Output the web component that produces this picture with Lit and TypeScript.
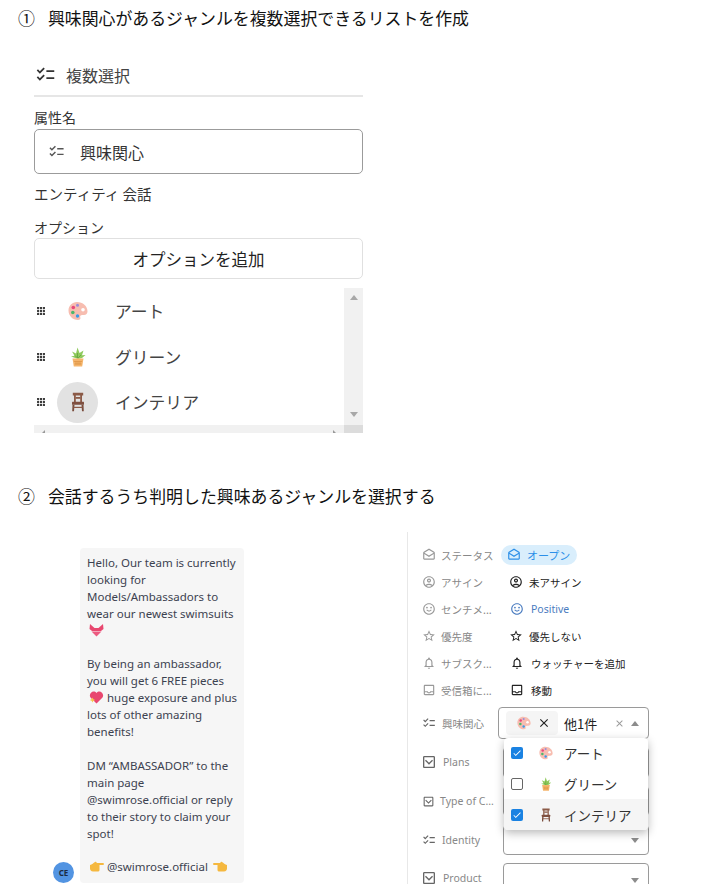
import { LitElement, html, css, svg } from "lit";
import { customElement } from "lit/decorators.js";

const P = {
  check: "M22 7h-9v2h9V7zm0 8h-9v2h9v-2zM5.54 11 2 7.46l1.41-1.41 2.12 2.12 4.24-4.24 1.41 1.41L5.54 11zm0 8L2 15.46l1.41-1.41 2.12 2.12 4.24-4.24 1.41 1.41L5.54 19z",
  mail: "M21.99 8c0-.72-.37-1.35-.94-1.7L12 1 2.95 6.3C2.38 6.65 2 7.28 2 8v10c0 1.1.9 2 2 2h16c1.1 0 2-.9 2-2l-.01-10zM19.99 8v.01L12 13 4 8l8-4.68L19.99 8zM4 18v-7.66l8 5.02 7.99-4.99L20 18H4z",
  user: "M12 2C6.48 2 2 6.48 2 12s4.48 10 10 10 10-4.48 10-10S17.52 2 12 2zM7.35 18.5C8.66 17.56 10.26 17 12 17s3.34.56 4.65 1.5c-1.31.94-2.91 1.5-4.65 1.5s-3.34-.56-4.65-1.5zm10.79-1.38C16.45 15.8 14.32 15 12 15s-4.45.8-6.14 2.12C4.7 15.73 4 13.95 4 12c0-4.42 3.58-8 8-8s8 3.58 8 8c0 1.95-.7 3.73-1.86 5.12zM12 6c-1.93 0-3.5 1.57-3.5 3.5S10.07 13 12 13s3.5-1.57 3.5-3.5S13.93 6 12 6zm0 5c-.83 0-1.5-.67-1.5-1.5S11.17 8 12 8s1.5.67 1.5 1.5S12.83 11 12 11z",
  smile: "M15.5 11a1.5 1.5 0 1 0 0-3 1.5 1.5 0 0 0 0 3zm-7 0a1.5 1.5 0 1 0 0-3 1.5 1.5 0 0 0 0 3zM12 2C6.47 2 2 6.48 2 12s4.47 10 10 10 10-4.48 10-10S17.52 2 12 2zm0 18c-4.42 0-8-3.58-8-8s3.58-8 8-8 8 3.58 8 8-3.58 8-8 8zm4.5-6.500c-.9 1.600-2.600 2.600-4.500 2.600s-3.600-1-4.500-2.600l1.300-.7c.6 1.100 1.800 1.800 3.200 1.800s2.600-.7 3.200-1.800z",
  star: "M22 9.24l-7.19-.62L12 2 9.19 8.63 2 9.24l5.46 4.73L5.82 21 12 17.27 18.18 21l-1.63-7.03L22 9.24zM12 15.4l-3.76 2.27 1-4.28-3.32-2.88 4.38-.38L12 6.1l1.71 4.04 4.38.38-3.32 2.88 1 4.28L12 15.4z",
  bell: "M12 22c1.1 0 2-.9 2-2h-4c0 1.1.9 2 2 2zm6-6v-5c0-3.07-1.63-5.64-4.5-6.32V4c0-.83-.67-1.5-1.5-1.5s-1.5.67-1.5 1.5v.68C7.64 5.36 6 7.92 6 11v5l-2 2v1h16v-1l-2-2zm-2 1H8v-6c0-2.48 1.51-4.5 4-4.5s4 2.02 4 4.5v6z",
  inbox: "M19 3H5c-1.100 0-2 .9-2 2v14c0 1.100.9 2 2 2h14c1.100 0 2-.9 2-2V5c0-1.100-.9-2-2-2zm0 16H5v-3h3.560c.69 1.190 1.970 2 3.450 2s2.750-.81 3.450-2H19v3zm0-5h-4.990c0 1.100-.9 2-2 2s-2-.9-2-2H5l-.01-9H19v9z",
  box: "M19 3H5c-1.100 0-2 .9-2 2v14c0 1.100.9 2 2 2h14c1.100 0 2-.9 2-2V5c0-1.100-.9-2-2-2zm0 16H5V5h14v14zM7.410 8.590 12 13.170l4.590-4.580L18 10l-6 6-6-6z",
  x: "M19 6.41 17.59 5 12 10.59 6.41 5 5 6.41 10.59 12 5 17.59 6.41 19 12 13.41 17.59 19 19 17.59 13.41 12z",
  tick: "M9 16.170 4.830 12l-1.420 1.410L9 19 21 7l-1.410-1.410z",
};
const ic = (d: string, size: number, color: string) => html`<svg width=${size} height=${size} viewBox="0 0 24 24" fill=${color} class="ic"><path d=${d}></path></svg>`;

const palette = (s: number) => html`<svg width=${s} height=${s} viewBox="0 0 20 20" class="ic">
  <path d="M9 1C4.200 1 .5 4.800 .5 9.500c0 5.300 4.200 9.500 9.500 9.500 2 0 2.800-1 2.300-2.500-.5-1.600.2-2.600 2-2.600h1.700c2.200 0 3.500-1.400 3.500-3.400C19.500 5 14.800 1 9 1z" fill="#f7bdb0"/>
  <circle cx="15" cy="8.800" r="1.800" fill="#fff"/>
  <circle cx="5.300" cy="6.500" r="1.800" fill="#e8487a"/><circle cx="9.500" cy="4.300" r="1.500" fill="#9a8cd8"/>
  <circle cx="4.800" cy="11.500" r="1.800" fill="#4cb86a"/><circle cx="9.500" cy="15" r="1.700" fill="#3b98e8"/></svg>`;
const plant = (s: number) => html`<svg width=${s} height=${s} viewBox="0 0 20 20" class="ic">
  <path d="M10 12 3 9.500 6.500 8.800 4 4.500 8 6.500 9.500 .5 11.500 6 15.500 3.500 14 8.300 17.500 8 14 11z" fill="#8fca5c"/>
  <path d="M9.500 6v5M7 8.500l2.500 2.500M13 8l-3 3" stroke="#5f9e3a" stroke-width=".7" fill="none"/>
  <path d="M4.500 11.500h11l-1.300 8H5.800z" fill="#f5b56c"/><path d="M6 14.500h8M6.500 17h7M8 14.500v3M10 14.500v3M12 14.500v3" stroke="#d98d3e" stroke-width=".6"/></svg>`;
const chair = (s: number) => html`<svg width=${s} height=${s} viewBox="0 0 20 20" class="ic">
  <path d="M4.800 .8h10.400v2.600h-1.200V10h-1.800V3.400H7.800V10H6V3.400H4.800z" fill="#8b5a47"/><rect x="7.500" y="5" width="5" height="1.800" fill="#8b5a47"/>
  <rect x="4" y="9.800" width="12" height="3" rx=".5" fill="#7f5040"/><path d="M4.500 12.800h2l-.5 6.500H4.200zM13.500 12.800h2l.3 6.500H14z" fill="#7a4d3d"/><rect x="5.500" y="14.800" width="9" height="1.200" fill="#8b5a47"/></svg>`;
const grip = html`<svg width="8" height="8" viewBox="0 0 8 8" class="ic" fill="#3c3c3c">${[1, 4, 7].flatMap((y) => [1, 4, 7].map((x) => svg`<circle cx=${x} cy=${y} r="1.250"></circle>`))}</svg>`;
const swim = html`<svg width="15" height="14" viewBox="0 0 15 14" class="em"><path d="M1 1 5.500 5h4L14 1l.5 5-2.500 2H3L.5 6z" fill="#e8476f"/><path d="M2.500 8.500h10l-5 5z" fill="#ec5a80"/></svg>`;
const heart = html`<svg width="15" height="14" viewBox="0 0 15 14" class="em tight"><path d="M7.500 13.500 1.500 7.500C-1 3.500 4.500-1 7.500 3 10.500-1 16 3.500 13.500 7.500z" fill="#e8476f"/><path d="M3.500 7.500l.9 1.800 1.800.7-1.800.7-.9 1.800-.9-1.800-1.800-.7 1.800-.7z" fill="#f8c84a"/></svg>`;
const handR = html`<svg width="15" height="13" viewBox="0 0 15 13" class="em tight"><path d="M1 5c2-.5 3.500-2 5-3 1-.5 2 0 1.500 1H14c1.200 0 1.200 2 0 2h-3.500v5c0 1-1 1.500-2 1.500H4C2 11.500 1 10 1 8.500z" fill="#f5b83f"/></svg>`;
const handL = html`<svg width="15" height="13" viewBox="0 0 15 13" class="em"><path d="M14 5c-2-.5-3.500-2-5-3-1-.5-2 0-1.500 1H1C-.2 3-.2 5 1 5h3.500v5c0 1 1 1.500 2 1.500H11c2 0 3-1.500 3-3z" fill="#f5b83f"/></svg>`;
const caret = (up = false) => html`<span class=${up ? "caret up" : "caret"}></span>`;

@customElement("app-root")
export class AppRoot extends LitElement {
  static styles = css`
    :host { display: block; width: 707px; height: 884px; overflow: hidden; background: #fff; color: #222; font-family: "Noto Sans CJK JP", "Noto Sans", sans-serif; }
    .ic { display: block; flex: none; }
    .em { display: inline-block; vertical-align: -2px; margin-left: 2px; }
    .em.tight { margin-right: -3px; }
    .heading { display: flex; height: 24px; margin: 6px 0 0 18px; gap: 13px; align-items: center; font-size: 16.900px; color: #111; line-height: 24px; white-space: nowrap; }
    .form { width: 329px; margin: 30px 0 0 34px; display: flex; flex-direction: column; color: #333; }
    .kind { display: flex; align-items: center; gap: 10px; height: 29px; padding: 0 0 6px 1px; font-size: 16px; color: #444; border-bottom: 2px solid #e6e6e6; box-sizing: content-box; }
    .label { font-size: 14px; line-height: 20px; }
    .attr { margin-top: 10px; }
    .name { margin-top: 2px; height: 45px; box-sizing: border-box; border: 1px solid #9b9b9b; border-radius: 5px; display: flex; align-items: center; gap: 15px; padding-left: 13px; font-size: 16px; color: #333; }
    .ent { margin-top: 10px; font-size: 14.500px; }
    .opt { margin-top: 13px; }
    .add { margin-top: 1px; height: 41px; border: 1px solid #e0e0e0; border-radius: 5px; box-sizing: border-box; display: flex; align-items: center; justify-content: center; font-size: 16.500px; color: #222; }
    .list { margin-top: 9px; height: 145px; display: grid; grid-template-columns: 310px 19px; grid-template-rows: 137px 8px; }
    .rows { padding-top: 0.500px; display: flex; flex-direction: column; }
    .opt-row { height: 45.500px; display: flex; align-items: center; font-size: 16.800px; color: #444; padding-left: 3px; box-sizing: border-box; }
    .emoji { width: 41px; height: 41px; border-radius: 50%; display: flex; align-items: center; justify-content: center; margin: 0 17px 0 12px; }
    .emoji.hover { background: #e2e2e2; }
    .vbar { background: #f1f1f1; display: flex; flex-direction: column; justify-content: space-between; align-items: center; padding: 7px 0 8px; }
    .hbar { background: #f1f1f1; display: flex; justify-content: space-between; align-items: center; padding: 0 8px; overflow: hidden; }
    .corner { background: #dcdcdc; }
    .tri-u { width: 0; height: 0; border: 4.500px solid transparent; border-top: 0; border-bottom: 5px solid #a8a8a8; }
    .tri-d { width: 0; height: 0; border: 4.500px solid transparent; border-bottom: 0; border-top: 5px solid #a8a8a8; }
    .tri-l { width: 0; height: 0; border: 3px solid transparent; border-left: 0; border-right: 3px solid #999; margin-top: 8px; }
    .tri-r { width: 0; height: 0; border: 3px solid transparent; border-right: 0; border-left: 3px solid #999; margin-top: 8px; }
    .h2 { margin-top: 51px; }
    .conv { display: flex; margin-top: 24px; height: 352px; }
    .chat { width: 407px; display: flex; align-items: flex-end; box-sizing: border-box; padding: 0 0 1px 53px; flex: none; }
    .avatar { width: 21px; height: 21px; border-radius: 50%; background: #5294e2; color: #1c2c44; font: 700 8px/21px "Noto Sans", sans-serif; text-align: center; flex: none; margin: 0 6px 0 0; }
    .bubble { width: 164px; height: 335px; background: #f6f6f6; border-radius: 4px; box-sizing: border-box; padding: 7px 0 0 7px; font: 11.500px/16.900px "Noto Sans", sans-serif; color: #3c4250; white-space: nowrap; }
    .side { position: relative; flex: 1; border-left: 1px solid #e8e8e8; padding-top: 9.500px; box-sizing: border-box; }
    .row { height: 27px; display: flex; align-items: center; font-size: 10.500px; }
    .k { width: 90px; box-sizing: border-box; padding-left: 14px; display: flex; align-items: center; gap: 5px; color: #888; white-space: nowrap; flex: none; }
    .v { display: flex; align-items: center; gap: 6px; color: #222; white-space: nowrap; padding-left: 11px; font-size: 10.500px; }
    .v.wide { padding-left: 12px; gap: 7px; }
    .pill { background: #d9eefc; color: #2c8fe8; border-radius: 12px; height: 20px; padding: 0 7px 0 6px; margin-left: 3px; display: flex; align-items: center; gap: 6px; font-size: 11px; }
    .pos { color: #4a7cc0; font-family: "Noto Sans", sans-serif; }
    .f { display: flex; align-items: center; font-size: 10.500px; }
    .f .k { font-family: "Noto Sans", "Noto Sans CJK JP", sans-serif; }
    .sel { box-sizing: border-box; border: 1px solid #9a9a9a; border-radius: 4px; width: 146px; margin-left: 5px; display: flex; align-items: center; justify-content: flex-end; padding-right: 9px; background: #fff; }
    .caret { width: 0; height: 0; border: 4.500px solid transparent; border-bottom: 0; border-top: 5px solid #8c8c8c; }
    .caret.up { border-top: 0; border-bottom: 5px solid #8c8c8c; }
    .f1 { height: 32px; margin-top: 3.500px; }
    .f1 .k { gap: 6px; }
    .f1 .sel { width: 151px; height: 32px; margin-left: 0; justify-content: flex-start; padding: 0 9px 0 7px; font-size: 13px; color: #222; }
    .chip { display: flex; align-items: center; gap: 6px; background: #f5f5f5; border-radius: 4px; padding: 0 7px 0 11px; height: 24px; margin-right: 6px; }
    .more { flex: 1; }
    .clr { margin-right: 6px; }
    .f2 { height: 30px; margin-top: 8px; }
    .f2 .sel { height: 31px; }
    .f3 { height: 30px; margin-top: 9px; }
    .f3 .sel { height: 30px; }
    .f4 { height: 30px; margin-top: 9px; }
    .f4 .sel { height: 30px; }
    .f5 { height: 21px; margin-top: 8px; align-items: flex-start; }
    .f5 .sel { height: 34px; }
    .f5 .k { margin-top: 7px; }
    .wk { padding-left: 13px; gap: 6px; }
    .idk { gap: 6px; }
    .type { padding-left: 14px; gap: 5px; }
    .menu { position: absolute; left: 96px; top: 206px; width: 144px; height: 92px; background: #fff; border-radius: 4px; box-shadow: 0 3px 10px rgba(0, 0, 0, .28); display: flex; flex-direction: column; overflow: hidden; }
    .mi { height: 30.700px; display: flex; align-items: center; font-size: 13.500px; color: #333; padding-left: 7px; }
    .mi.on { background: #f5f5f5; }
    .cb { width: 12px; height: 12px; box-sizing: border-box; border-radius: 2px; margin-right: 16px; flex: none; display: flex; align-items: center; justify-content: center; }
    .cb.c { background: #1a82e2; }
    .cb.u { border: 1.500px solid #666; }
    .mi .ic { margin-right: 11px; }
    .cb .ic { margin: 0; }
  `;

  private kv(icon: string, key: string, val: unknown) {
    return html`<div class="row"><div class="k">${ic(icon, 14, "#999")}<span>${key}</span></div>${val}</div>`;
  }

  private field(cls: string, icon: string, key: string, size: number, kCls: string) {
    return html`<div class="f ${cls}"><div class="k ${kCls}">${ic(icon, size, "#666")}<span>${key}</span></div><div class="sel">${caret()}</div></div>`;
  }

  render() {
    return html`
      <div class="heading"><span>①</span><span>興味関心があるジャンルを複数選択できるリストを作成</span></div>
      <div class="form">
        <div class="kind">${ic(P.check, 21, "#333")}<span>複数選択</span></div>
        <div class="label attr">属性名</div>
        <div class="name">${ic(P.check, 17, "#555")}<span>興味関心</span></div>
        <div class="label ent">エンティティ 会話</div>
        <div class="label opt">オプション</div>
        <div class="add">オプションを追加</div>
        <div class="list">
          <div class="rows">
            <div class="opt-row">${grip}<div class="emoji">${palette(20)}</div><span>アート</span></div>
            <div class="opt-row">${grip}<div class="emoji">${plant(20)}</div><span>グリーン</span></div>
            <div class="opt-row">${grip}<div class="emoji hover">${chair(20)}</div><span>インテリア</span></div>
          </div>
          <div class="vbar"><span class="tri-u"></span><span class="tri-d"></span></div>
          <div class="hbar"><span class="tri-l"></span><span class="tri-r"></span></div>
          <div class="corner"></div>
        </div>
      </div>
      <div class="heading h2"><span>②</span><span>会話するうち判明した興味あるジャンルを選択する</span></div>
      <div class="conv">
        <div class="chat">
          <div class="avatar">CE</div>
          <div class="bubble">Hello, Our team is currently<br>looking for<br>Models/Ambassadors to<br>wear our newest swimsuits<br>${swim}<br><br>By being an ambassador,<br>you will get 6 FREE pieces<br>${heart}&nbsp; huge exposure and plus<br>lots of other amazing<br>benefits!<br><br>DM “AMBASSADOR” to the<br>main page<br>@swimrose.official or reply<br>to their story to claim your<br>spot!<br><br>${handR}&nbsp; @swimrose.official ${handL}</div>
        </div>
        <div class="side">
          ${this.kv(P.mail, "ステータス", html`<div class="pill">${ic(P.mail, 14, "#2c8fe8")}<span>オープン</span></div>`)}
          ${this.kv(P.user, "アサイン", html`<div class="v">${ic(P.user, 14, "#222")}<span>未アサイン</span></div>`)}
          ${this.kv(P.smile, "センチメ...", html`<div class="v wide pos">${ic(P.smile, 14, "#4a7cc0")}<span>Positive</span></div>`)}
          ${this.kv(P.star, "優先度", html`<div class="v">${ic(P.star, 14, "#222")}<span>優先しない</span></div>`)}
          ${this.kv(P.bell, "サブスク...", html`<div class="v wide">${ic(P.bell, 14, "#222")}<span>ウォッチャーを追加</span></div>`)}
          ${this.kv(P.inbox, "受信箱に...", html`<div class="v wide">${ic(P.inbox, 14, "#222")}<span>移動</span></div>`)}
          <div class="f f1"><div class="k">${ic(P.check, 14, "#666")}<span>興味関心</span></div>
            <div class="sel"><div class="chip">${palette(14)}${ic(P.x, 14, "#222")}</div><span class="more">他1件</span><span class="clr">${ic(P.x, 11, "#999")}</span>${caret(true)}</div>
          </div>
          ${this.field("f2", P.box, "Plans", 16, "wk")}
          ${this.field("f3", P.box, "Type of C...", 13, "type")}
          ${this.field("f4", P.check, "Identity", 14, "idk")}
          ${this.field("f5", P.box, "Product", 16, "wk")}
          <div class="menu">
            <div class="mi"><span class="cb c">${ic(P.tick, 10, "#fff")}</span>${palette(14)}<span>アート</span></div>
            <div class="mi"><span class="cb u"></span>${plant(14)}<span>グリーン</span></div>
            <div class="mi on"><span class="cb c">${ic(P.tick, 10, "#fff")}</span>${chair(14)}<span>インテリア</span></div>
          </div>
        </div>
      </div>
    `;
  }
}
